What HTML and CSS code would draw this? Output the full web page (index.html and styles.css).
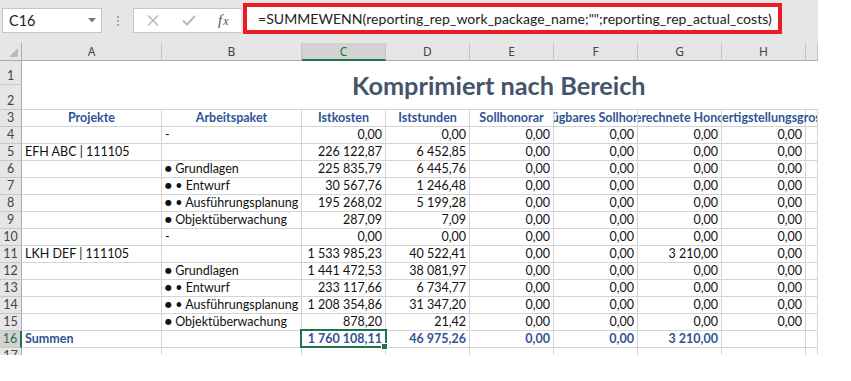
FILE: index.html
```html
<!DOCTYPE html>
<html lang="de">
<head>
<meta charset="utf-8">
<title>Komprimiert nach Bereich</title>
<link rel="stylesheet" href="styles.css">
</head>
<body>
<div class="app">
  <div class="toolbar">
    <div class="namebox">
      <span>C16</span>
      <svg class="caret" width="8" height="5" viewBox="0 0 8 5"><path d="M0 0H8L4 4.5Z" fill="#7a7a7a"/></svg>
    </div>
    <div class="grip"><i></i><i></i><i></i></div>
    <div class="fbtns">
      <svg class="ico-x" width="12" height="11" viewBox="0 0 12 11"><path d="M1 0.5L11 10.5M11 0.5L1 10.5" stroke="#b4b4b4" stroke-width="1.3" fill="none"/></svg>
      <svg class="ico-ok" width="14" height="11" viewBox="0 0 14 11"><path d="M1 5.5L5 9.5L13 1" stroke="#bdbdbd" stroke-width="2.2" fill="none"/></svg>
      <span class="fx"><i>f</i><i class="sx">x</i></span>
    </div>
    <div class="formula">=SUMMEWENN(reporting_rep_work_package_name;"";reporting_rep_actual_costs)</div>
  </div>

  <div class="sheet">
    <div class="corner"><span class="tri"></span></div>
    <div class="ch">A</div><div class="ch">B</div><div class="ch selc">C</div><div class="ch">D</div><div class="ch">E</div><div class="ch">F</div><div class="ch">G</div><div class="ch">H</div><div class="ch"></div>

    <div class="rh">1</div>
    <div class="title">Komprimiert nach Bereich</div>
    <div class="rh">2</div>

    <div class="rh">3</div>
    <div class="h">Projekte</div><div class="h">Arbeitspaket</div><div class="h">Istkosten</div><div class="h">Iststunden</div><div class="h">Sollhonorar</div><div class="h">Verfügbares Sollhonorar</div><div class="h">Abgerechnete Honorare</div><div class="h hl">ertigstellungsgrost</div><div></div>

    <div class="rh">4</div>
    <div></div><div>-</div><div class="n">0,00</div><div class="n">0,00</div><div class="n">0,00</div><div class="n">0,00</div><div class="n">0,00</div><div class="n">0,00</div><div></div>

    <div class="rh">5</div>
    <div>EFH ABC | 111105</div><div></div><div class="n">226 122,87</div><div class="n">6 452,85</div><div class="n">0,00</div><div class="n">0,00</div><div class="n">0,00</div><div class="n">0,00</div><div></div>

    <div class="rh">6</div>
    <div></div><div><span class="dot">●</span>&nbsp;Grundlagen</div><div class="n">225 835,79</div><div class="n">6 445,76</div><div class="n">0,00</div><div class="n">0,00</div><div class="n">0,00</div><div class="n">0,00</div><div></div>

    <div class="rh">7</div>
    <div></div><div><span class="dot">●</span>&nbsp;• Entwurf</div><div class="n">30 567,76</div><div class="n">1 246,48</div><div class="n">0,00</div><div class="n">0,00</div><div class="n">0,00</div><div class="n">0,00</div><div></div>

    <div class="rh">8</div>
    <div></div><div><span class="dot">●</span>&nbsp;• Ausführungsplanung</div><div class="n">195 268,02</div><div class="n">5 199,28</div><div class="n">0,00</div><div class="n">0,00</div><div class="n">0,00</div><div class="n">0,00</div><div></div>

    <div class="rh">9</div>
    <div></div><div><span class="dot">●</span>&nbsp;Objektüberwachung</div><div class="n">287,09</div><div class="n">7,09</div><div class="n">0,00</div><div class="n">0,00</div><div class="n">0,00</div><div class="n">0,00</div><div></div>

    <div class="rh">10</div>
    <div></div><div>-</div><div class="n">0,00</div><div class="n">0,00</div><div class="n">0,00</div><div class="n">0,00</div><div class="n">0,00</div><div class="n">0,00</div><div></div>

    <div class="rh">11</div>
    <div>LKH DEF | 111105</div><div></div><div class="n">1 533 985,23</div><div class="n">40 522,41</div><div class="n">0,00</div><div class="n">0,00</div><div class="n">3 210,00</div><div class="n">0,00</div><div></div>

    <div class="rh">12</div>
    <div></div><div><span class="dot">●</span>&nbsp;Grundlagen</div><div class="n">1 441 472,53</div><div class="n">38 081,97</div><div class="n">0,00</div><div class="n">0,00</div><div class="n">0,00</div><div class="n">0,00</div><div></div>

    <div class="rh">13</div>
    <div></div><div><span class="dot">●</span>&nbsp;• Entwurf</div><div class="n">233 117,66</div><div class="n">6 734,77</div><div class="n">0,00</div><div class="n">0,00</div><div class="n">0,00</div><div class="n">0,00</div><div></div>

    <div class="rh">14</div>
    <div></div><div><span class="dot">●</span>&nbsp;• Ausführungsplanung</div><div class="n">1 208 354,86</div><div class="n">31 347,20</div><div class="n">0,00</div><div class="n">0,00</div><div class="n">0,00</div><div class="n">0,00</div><div></div>

    <div class="rh">15</div>
    <div></div><div><span class="dot">●</span>&nbsp;Objektüberwachung</div><div class="n">878,20</div><div class="n">21,42</div><div class="n">0,00</div><div class="n">0,00</div><div class="n">0,00</div><div class="n">0,00</div><div></div>

    <div class="rh selr">16</div>
    <div class="s">Summen</div><div></div><div class="n s selcell">1 760 108,11</div><div class="n s">46 975,26</div><div class="n s">0,00</div><div class="n s">0,00</div><div class="n s">3 210,00</div><div></div><div></div>

    <div class="rh">17</div>
    <div></div><div></div><div></div><div></div><div></div><div></div><div></div><div></div><div></div>
  </div>
</div>
</body>
</html>
```

FILE: styles.css
```css
body {
  margin: 0;
  background: #ffffff;
}

.app {
  width: 818px;
  height: 355px;
  overflow: hidden;
  font-family: Lato, "Liberation Sans", sans-serif;
}

/* ---------- formula bar ---------- */
.toolbar {
  height: 43px;
  box-sizing: border-box;
  background: #e6e6e6;
  display: flex;
  align-items: flex-start;
  padding-top: 3px;
}

.namebox {
  margin: 5px 0 0 2px;
  width: 100px;
  height: 25px;
  box-sizing: border-box;
  background: #fff;
  border: 1px solid #c6c6c6;
  display: flex;
  align-items: center;
  justify-content: space-between;
  padding: 0 5px 0 6px;
  font: 14.5px Lato, sans-serif;
  color: #222;
}

.grip {
  width: 31px;
  height: 25px;
  margin-top: 5px;
  display: flex;
  flex-direction: column;
  align-items: center;
  justify-content: center;
  gap: 2px;
}

.grip i {
  width: 2px;
  height: 2px;
  background: #a8a8a8;
}

.fbtns {
  margin-top: 5px;
  width: 108px;
  height: 25px;
  box-sizing: border-box;
  background: #fff;
  border: 1px solid #c6c6c6;
  border-right: none;
  display: flex;
  align-items: center;
  padding-left: 13px;
}

.ico-x { margin-right: 23px; }
.ico-ok { margin-right: 22px; }

.fx {
  font-family: "Liberation Serif", serif;
  font-size: 15px;
  color: #555;
  line-height: 1;
}

.fx .sx {
  font-size: 12px;
  margin-left: 1px;
}

.formula {
  margin-left: 2px;
  width: 539px;
  height: 31px;
  box-sizing: border-box;
  border: 4px solid #ec1c24;
  background: #fff;
  padding-left: 11px;
  display: flex;
  align-items: center;
  font: 14px Lato, sans-serif;
  letter-spacing: 0.05px;
  color: #222;
  white-space: nowrap;
  overflow: hidden;
}

/* ---------- sheet ---------- */
.sheet {
  display: grid;
  grid-template-columns: 22px 140px 140px repeat(6, 84px) 12px;
  grid-template-rows: 18px 24px 25px repeat(14, 17px) 17px;
}

.sheet > div {
  box-sizing: border-box;
  border-right: 1px solid #d4d4d4;
  border-bottom: 1px solid #d4d4d4;
  white-space: nowrap;
  overflow: hidden;
  display: flex;
  align-items: flex-end;
  padding: 0 3px 1px;
  font-size: 12.5px;
  line-height: 14px;
  color: #111;
}

.sheet > .corner {
  background: #e6e6e6;
  border-right: 1px solid #ababab;
  border-bottom: 1px solid #ababab;
  position: relative;
}

.tri {
  position: absolute;
  right: 3px;
  bottom: 3px;
  width: 0;
  height: 0;
  border-left: 9px solid transparent;
  border-bottom: 9px solid #b9b9b9;
}

.sheet > .ch {
  background: #e6e6e6;
  border-right: 1px solid #c4c4c4;
  border-bottom: 1px solid #ababab;
  justify-content: center;
  align-items: center;
  padding: 0;
  font: 12px "Noto Sans", sans-serif;
  color: #444;
}

.sheet > .selc {
  background: #d2d2d2;
  border-bottom: 2px solid #217346;
  color: #217346;
}

.sheet > .rh {
  background: #e6e6e6;
  border-right: 1px solid #ababab;
  border-bottom: 1px solid #c8c8c8;
  justify-content: center;
  padding: 0 0 1px;
  font-size: 12.5px;
  color: #444;
}

.sheet > .selr {
  background: #d2d2d2;
  border-right: 2px solid #217346;
  color: #217346;
}

.sheet > .title {
  grid-row: 2 / span 2;
  grid-column: 2 / -1;
  border-right: none;
  align-items: center;
  padding: 0 0 0 330px;
  font-size: 25.3px;
  line-height: 30px;
  font-weight: 700;
  color: #44546a;
}

.sheet > .h {
  justify-content: center;
  font-weight: 700;
  color: #2f5496;
  padding: 0 0 1px;
}

.sheet > .hl {
  justify-content: flex-start;
  overflow: visible;
}

.sheet > .n {
  justify-content: flex-end;
}

.sheet > .s {
  font-weight: 700;
  color: #2f5496;
}

.sheet > .selcell {
  position: relative;
  overflow: visible;
}

.selcell::after {
  content: "";
  position: absolute;
  left: -2px;
  top: -2px;
  right: -2px;
  bottom: -1px;
  border: 2px solid #217346;
}

.selcell::before {
  content: "";
  position: absolute;
  right: -3px;
  bottom: -3px;
  width: 5px;
  height: 5px;
  background: #217346;
  border: 1px solid #fff;
  z-index: 1;
}

.dot {
  font-family: "DejaVu Sans", sans-serif;
  font-size: 8px;
  line-height: 14px;
}
```
